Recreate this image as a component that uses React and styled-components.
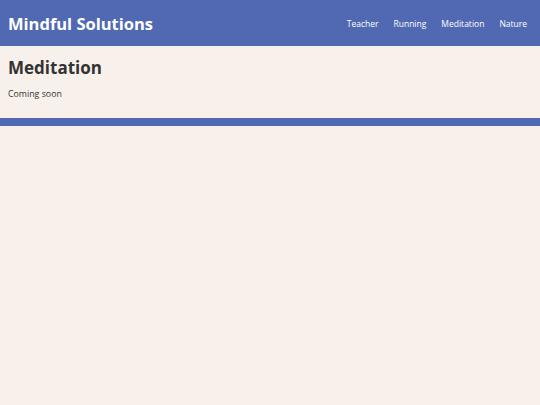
import styled, { createGlobalStyle } from "styled-components";

const GlobalStyle = createGlobalStyle`
  html, body {
    margin: 0;
    padding: 0;
    background: #f8f1eb;
    font-family: "Open Sans", "Noto Sans", sans-serif;
    color: #333;
  }
`;

const Header = styled.header`
  display: flex;
  justify-content: space-between;
  align-items: center;
  height: 46px;
  padding: 0 13px 0 8px;
  background: #5169b2;
`;

const Logo = styled.h1`
  margin: 0;
  font-size: 16.5px;
  font-weight: 700;
  color: #fff;
`;

const Nav = styled.nav`
  display: flex;
  gap: 15px;
`;

const NavLink = styled.a`
  font-size: 8.5px;
  color: #fff;
  text-decoration: none;
`;

const Main = styled.main`
  padding: 10px 8px 18px;
`;

const Title = styled.h2`
  margin: 0 0 9px;
  font-size: 17px;
  font-weight: 700;
  color: #333;
`;

const Text = styled.p`
  margin: 0;
  font-size: 8.8px;
  color: #333;
`;

const Footer = styled.footer`
  height: 8px;
  background: #5169b2;
`;

export default function App() {
  const links = ["Teacher", "Running", "Meditation", "Nature"];
  return (
    <>
      <GlobalStyle />
      <Header>
        <Logo>Mindful Solutions</Logo>
        <Nav>
          {links.map((l) => (
            <NavLink key={l} href="#">
              {l}
            </NavLink>
          ))}
        </Nav>
      </Header>
      <Main>
        <Title>Meditation</Title>
        <Text>Coming soon</Text>
      </Main>
      <Footer />
    </>
  );
}
